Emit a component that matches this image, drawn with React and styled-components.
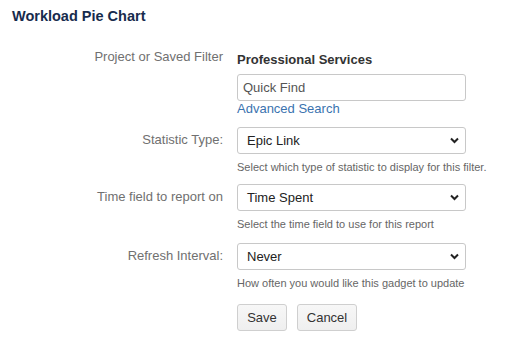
import React from "react";
import styled, { createGlobalStyle } from "styled-components";

const Global = createGlobalStyle`
  html, body { margin: 0; padding: 0; background: #fff; }
  body { font-family: "Liberation Sans", Arial, sans-serif; }
`;

const Page = styled.div`
  width: 512px;
  height: 343px;
  box-sizing: border-box;
  padding: 7px 0 0 12px;
  overflow: hidden;
`;

const Title = styled.h2`
  margin: 0;
  font-size: 14.5px;
  line-height: 18px;
  font-weight: bold;
  color: #172b4d;
`;

const Form = styled.div`
  display: grid;
  grid-template-columns: 211px 229px;
  column-gap: 14px;
  margin-top: 24px;
  align-items: start;
`;

const Label = styled.div`
  text-align: right;
  font-size: 13px;
  line-height: 16px;
  color: #707070;
  white-space: nowrap;
  padding-top: ${(p) => p.$top ?? 5}px;
`;

const Field = styled.div`
  display: flex;
  flex-direction: column;
  align-items: flex-start;
  margin-bottom: ${(p) => p.$mb || 0}px;
`;

const Strong = styled.div`
  font-size: 13px;
  line-height: 16px;
  font-weight: bold;
  color: #333;
  margin-top: 3px;
  margin-bottom: 6px;
`;

const TextInput = styled.div`
  box-sizing: border-box;
  width: 229px;
  height: 27px;
  border: 1px solid #c8c8c8;
  border-radius: 3px;
  padding: 0 0 0 5px;
  font-size: 13px;
  line-height: 25px;
  color: #555;
`;

const Link = styled.a`
  font-size: 13px;
  line-height: 16px;
  color: #3b73af;
  text-decoration: none;
`;

const SelectBox = styled.div`
  position: relative;
  box-sizing: border-box;
  width: 229px;
  height: 27px;
  border: 1px solid #c8c8c8;
  border-radius: 3px;
  background: #fff;
  padding-left: 9px;
  font-size: 13px;
  line-height: 25px;
  color: #222;
`;

const Chevron = styled.svg`
  position: absolute;
  right: 6px;
  top: 9px;
  width: 9px;
  height: 7px;
`;

const Help = styled.div`
  font-size: 11px;
  line-height: 14px;
  color: #666;
  margin-top: 6px;
  white-space: nowrap;
`;

const Buttons = styled.div`
  display: flex;
  gap: 10px;
`;

const Button = styled.button`
  box-sizing: border-box;
  width: ${(p) => p.$w}px;
  height: 27px;
  padding: 0;
  border: 1px solid #cfcfcf;
  border-radius: 3px;
  background: linear-gradient(#f7f7f7, #efefef);
  font-family: "Liberation Sans", Arial, sans-serif;
  font-size: 13px;
  color: #333;
`;

function Select({ value }) {
  return (
    <SelectBox>
      {value}
      <Chevron viewBox="0 0 9 7">
        <path d="M1 1.5 L4.5 5 L8 1.5" fill="none" stroke="#222" strokeWidth="2" />
      </Chevron>
    </SelectBox>
  );
}

export default function App() {
  return (
    <>
      <Global />
      <Page>
        <Title>Workload Pie Chart</Title>
        <Form>
          <Label $top={0}>Project or Saved Filter</Label>
          <Field $mb={10}>
            <Strong>Professional Services</Strong>
            <TextInput>Quick Find</TextInput>
            <Link href="#">Advanced Search</Link>
          </Field>

          <Label>Statistic Type:</Label>
          <Field $mb={10}>
            <Select value="Epic Link" />
            <Help>Select which type of statistic to display for this filter.</Help>
          </Field>

          <Label>Time field to report on</Label>
          <Field $mb={12}>
            <Select value="Time Spent" />
            <Help>Select the time field to use for this report</Help>
          </Field>

          <Label>Refresh Interval:</Label>
          <Field $mb={14}>
            <Select value="Never" />
            <Help>How often you would like this gadget to update</Help>
          </Field>

          <div />
          <Buttons>
            <Button $w={50}>Save</Button>
            <Button $w={60}>Cancel</Button>
          </Buttons>
        </Form>
      </Page>
    </>
  );
}
